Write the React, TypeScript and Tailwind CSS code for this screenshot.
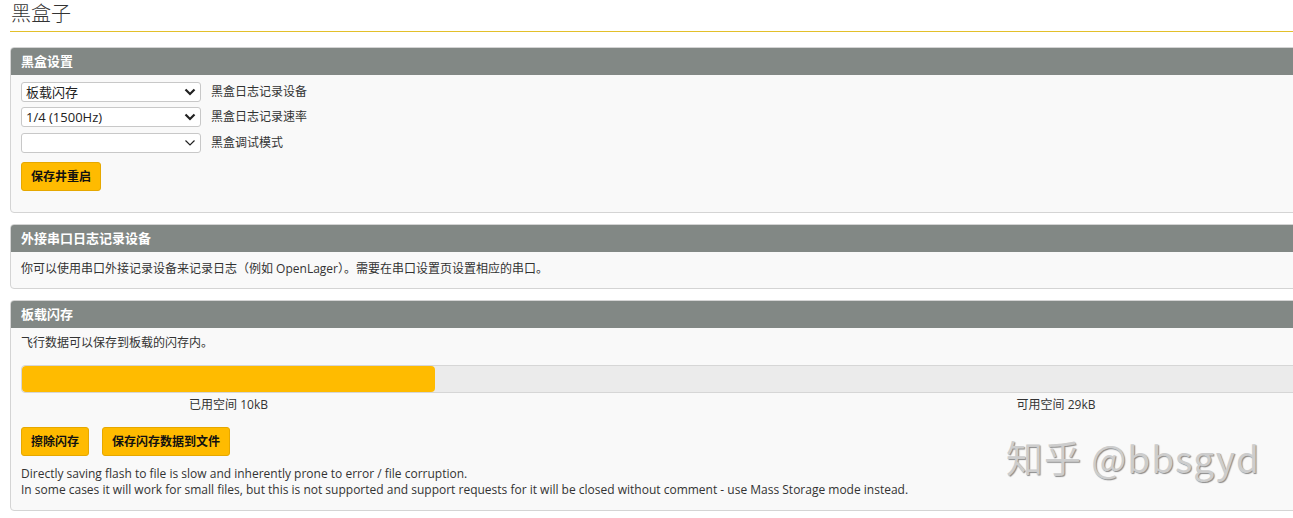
import React from "react";

const font = { fontFamily: '"Open Sans", "Noto Sans CJK SC", sans-serif' };

function Chevron({ bold }: { bold?: boolean }) {
  return (
    <svg width="12" height="8" viewBox="0 0 12 8" className="mr-[2px]">
      <path d="M1.5 1.5 L6 6 L10.5 1.5" fill="none" stroke="#222" strokeWidth={bold ? 2.2 : 1.2} />
    </svg>
  );
}

function Select({ value, bold }: { value: string; bold?: boolean }) {
  return (
    <div className="flex items-center justify-between w-[180px] h-[20px] bg-white border border-[#c8c8c8] rounded-[3px] pl-[4px] pr-[2px] text-[13px] text-[#222] leading-none">
      <span>{value}</span>
      <Chevron bold={bold} />
    </div>
  );
}

function Btn({ children }: { children: React.ReactNode }) {
  return (
    <div className="h-[29px] px-[9px] flex items-center bg-[#ffbb00] border border-[#e6a800] rounded-[3px] text-[12px] font-bold text-[#111]">
      {children}
    </div>
  );
}

function Panel({ title, children }: { title: string; children: React.ReactNode }) {
  return (
    <div className="border border-[#d4d4d4] rounded-[4px] bg-[#f9f9f9] overflow-hidden">
      <div className="h-[27px] bg-[#828885] flex items-center px-[10px] text-white text-[13px] font-bold">{title}</div>
      {children}
    </div>
  );
}

export default function App() {
  return (
    <div className="w-[1293px] h-[518px] overflow-hidden bg-white relative" style={font}>
      <div className="w-[1687px] pl-[10px]">
        <div className="h-[32px] border-b border-[#e3c02a] flex items-center">
          <span className="text-[20px] text-[#333] font-light pl-[1px] -mt-[4px]">黑盒子</span>
        </div>
        <div className="mt-[15px] flex flex-col gap-[11px]">
          <Panel title="黑盒设置">
            <div className="px-[10px] pt-[7px] pb-[21px] flex flex-col">
              <div className="flex items-center gap-[10px]">
                <Select value="板载闪存" bold />
                <span className="text-[12px] text-[#333]">黑盒日志记录设备</span>
              </div>
              <div className="flex items-center gap-[10px] mt-[5px]">
                <Select value="1/4 (1500Hz)" bold />
                <span className="text-[12px] text-[#333]">黑盒日志记录速率</span>
              </div>
              <div className="flex items-center gap-[10px] mt-[6px]">
                <Select value="" />
                <span className="text-[12px] text-[#333]">黑盒调试模式</span>
              </div>
              <div className="flex mt-[9px]">
                <Btn>保存井重启</Btn>
              </div>
            </div>
          </Panel>
          <Panel title="外接串口日志记录设备">
            <div className="px-[10px] h-[36px] flex items-center text-[12px] text-[#333] pb-[3px]">
              你可以使用串口外接记录设备来记录日志（例如 OpenLager）。需要在串口设置页设置相应的串口。
            </div>
          </Panel>
          <Panel title="板载闪存">
            <div className="px-[10px] pt-[7px] pb-[12px] text-[12px] text-[#333]">
              <div className="h-[16px] flex items-center">飞行数据可以保存到板载的闪存内。</div>
              <div className="mt-[14px] h-[28px] flex rounded-[4px] border border-[#d6d6d6] bg-[#ebebeb] overflow-hidden">
                <div className="w-[413px] h-full bg-[#ffbb00] rounded-[4px]" />
                <div className="flex-1" />
              </div>
              <div className="flex mt-[4px] h-[16px] items-center">
                <div className="w-[415px] text-center">已用空间 10kB</div>
                <div className="flex-1 text-center">可用空间 29kB</div>
              </div>
              <div className="flex gap-[13px] mt-[14px]">
                <Btn>擦除闪存</Btn>
                <Btn>保存闪存数据到文件</Btn>
              </div>
              <div className="mt-[10px] leading-[16px]">
                <div>Directly saving flash to file is slow and inherently prone to error / file corruption.</div>
                <div>In some cases it will work for small files, but this is not supported and support requests for it will be closed without comment - use Mass Storage mode instead.</div>
              </div>
            </div>
          </Panel>
        </div>
      </div>
      <div
        className="absolute left-[1006px] top-[439px] text-[37px] text-[#cdcdcd] leading-none tracking-[1px]"
        style={{ fontFamily: '"Noto Sans CJK SC", "Liberation Sans", sans-serif', textShadow: "1px 1px 1px #8a8a8a" }}
      >
        知乎 @bbsgyd
      </div>
    </div>
  );
}
